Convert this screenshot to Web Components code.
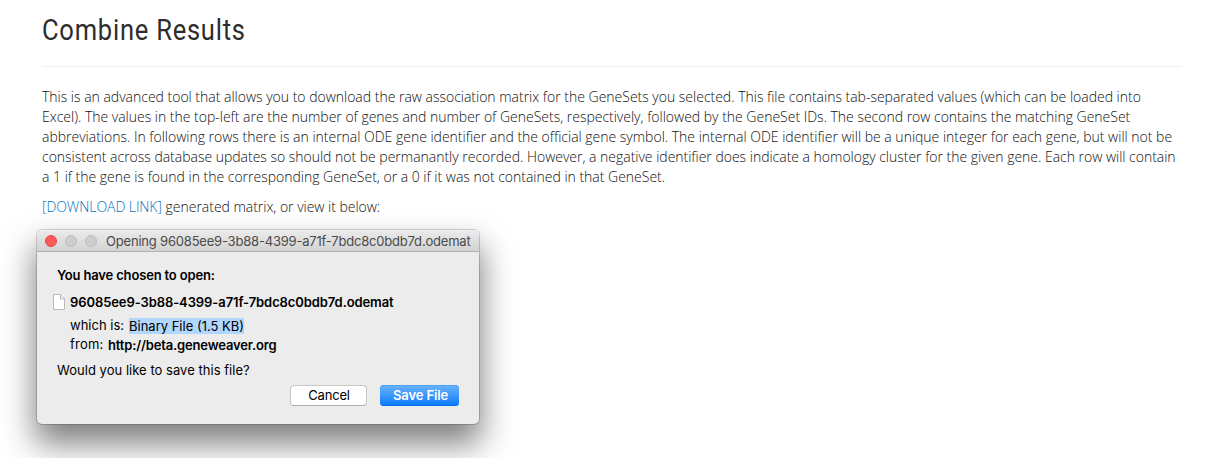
<!DOCTYPE html>
<html lang="en">
<head>
<meta charset="utf-8">
<title>Combine Results</title>
<style>
html,body{margin:0;background:#fff}
body{height:458px;overflow:hidden;font:300 14px/20px "Open Sans",sans-serif;color:#111}
</style>
</head>
<body>
<combine-page></combine-page>
<script>
// Text run whose tracking is set so that it fills the given width.
class FitText extends HTMLElement {
  constructor() {
    super();
    this.attachShadow({mode: 'open'}).innerHTML =
      '<style>:host{display:inline-block;white-space:pre}span{display:inline-block}</style><span><slot></slot></span>';
  }
  connectedCallback() {
    const target = parseFloat(this.getAttribute('w'));
    const span = this.shadowRoot.querySelector('span');
    const natural = span.offsetWidth;
    span.style.letterSpacing = (target - natural) / this.textContent.length + 'px';
    this.style.width = target + 'px';
  }
}

class PageHeading extends HTMLElement {
  constructor() {
    super();
    this.attachShadow({mode: 'open'}).innerHTML = `
      <style>
        :host{display:block;height:66px;border-bottom:1px solid #eee;box-sizing:content-box}
        h1{margin:0;padding-top:13px;font:400 29px/34px Roboto,sans-serif;color:#2d2d2d;transform:scaleX(.88);transform-origin:0 0}
      </style><h1><slot></slot></h1>`;
  }
}

class MacButton extends HTMLElement {
  constructor() {
    super();
    this.attachShadow({mode: 'open'}).innerHTML = `
      <style>
        :host{display:block}
        button{display:flex;justify-content:center;align-items:center;box-sizing:border-box;width:77px;height:21px;margin:0;padding:0 0 0 1px;
          border:1px solid #c6c6c6;border-bottom-color:#adadad;border-radius:4px;background:#fff;color:#000;font:400 13px/19px Inter,sans-serif}
        :host([primary]) button{width:79px;border:0;background:linear-gradient(#6cb3fa,#3b97fc 50%,#087aff);
          box-shadow:inset 0 1px #4ba2f8,inset 0 -1px #0870ee;color:#fff;font-weight:600;padding-left:2px}
      </style><button><slot></slot></button>`;
  }
}

class MacDialog extends HTMLElement {
  constructor() {
    super();
    this.attachShadow({mode: 'open'}).innerHTML = `
      <style>
        :host{display:block;box-sizing:border-box;width:442px;height:194px;border-radius:5px;background:#ececec;overflow:visible;
          box-shadow:0 0 0 1px rgba(0,0,0,.17),0 18px 32px 2px rgba(0,0,0,.5);font:400 13px/16px Inter,sans-serif;color:#000}
        header{display:flex;align-items:center;box-sizing:border-box;height:22px;padding-left:8px;border-radius:5px 5px 0 0;
          background:linear-gradient(#ebebeb,#d3d3d3);border-bottom:1px solid #b1b1b1;box-shadow:inset 0 1px #f4f4f4;color:#4b4b4b}
        i{box-sizing:border-box;width:12px;height:12px;border-radius:50%;border:1px solid #bdbdbd;background:#cdcdcd;margin-right:8px}
        i.close{background:#fc5b57;border-color:#e2484a}
        .title{margin-left:1px;padding-top:1px}
      </style>
      <header><i class="close"></i><i></i><i></i><span class="title"><slot name="title"></slot></span></header>
      <slot></slot>`;
  }
}

class DownloadPrompt extends HTMLElement {
  constructor() {
    super();
    this.attachShadow({mode: 'open'}).innerHTML = `
      <style>
        :host{display:block;padding:15px 20px 0}
        .row{display:flex;height:16px}
        b{font-weight:600}
        .file{margin:11px 0 0 -4px;gap:5px}
        .file svg{display:block;flex:none}
        .which{margin:7px 0 0 13px;gap:5px}
        .from{margin:3px 0 0 13px;gap:5px}
        .value{margin-top:1px;height:16px}
        mark{background:#b2d7fe;color:#000}
        .ask{margin-top:10px}
        .actions{display:flex;justify-content:flex-end;gap:13px;margin-top:7px}
      </style>
      <div class="row"><b><fit-text w="158">You have chosen to open:</fit-text></b></div>
      <div class="row file">
        <svg width="12" height="17" viewBox="0 0 12 17"><path d="M.5 .5h7l4 4.500v10.500h-11z" fill="#fff" stroke="#b9b9b9"/><path d="M7.500 .5v4.500h4" fill="#eee" stroke="#b9b9b9"/></svg>
        <b><fit-text w="324">96085ee9-3b88-4399-a71f-7bdc8c0bdb7d.odemat</fit-text></b>
      </div>
      <div class="row which"><fit-text w="54">which is:</fit-text><mark class="value"><fit-text w="115">Binary File (1.5 KB)</fit-text></mark></div>
      <div class="row from"><fit-text w="33">from:</fit-text><b class="value"><fit-text w="168">http://beta.geneweaver.org</fit-text></b></div>
      <div class="row ask"><fit-text w="193">Would you like to save this file?</fit-text></div>
      <div class="actions"><mac-button><fit-text w="42">Cancel</fit-text></mac-button><mac-button primary><fit-text w="55">Save File</fit-text></mac-button></div>`;
  }
}

class CombinePage extends HTMLElement {
  constructor() {
    super();
    this.attachShadow({mode: 'open'}).innerHTML = `
      <style>
        :host{display:block;padding:0 27px 0 42px}
        p{margin:0 0 10px}
        .intro{margin-top:20px}
        .intro fit-text{display:block}
        a{color:#0073bf;text-decoration:none}
        mac-dialog{margin:13px 0 0 -5px}
      </style>
      <page-heading><fit-text w="231">Combine Results</fit-text></page-heading>
      <p class="intro">
        <fit-text w="1099">This is an advanced tool that allows you to download the raw association matrix for the GeneSets you selected. This file contains tab-separated values (which can be loaded into</fit-text>
        <fit-text w="1088">Excel). The values in the top-left are the number of genes and number of GeneSets, respectively, followed by the GeneSet IDs. The second row contains the matching GeneSet</fit-text>
        <fit-text w="1130">abbreviations. In following rows there is an internal ODE gene identifier and the official gene symbol. The internal ODE identifier will be a unique integer for each gene, but will not be</fit-text>
        <fit-text w="1134">consistent across database updates so should not be permanantly recorded. However, a negative identifier does indicate a homology cluster for the given gene. Each row will contain</fit-text>
        <fit-text w="623">a 1 if the gene is found in the corresponding GeneSet, or a 0 if it was not contained in that GeneSet.</fit-text>
      </p>
      <p><a><fit-text w="120">[DOWNLOAD LINK]</fit-text></a><fit-text w="218"> generated matrix, or view it below:</fit-text></p>
      <mac-dialog><fit-text slot="title" w="365">Opening 96085ee9-3b88-4399-a71f-7bdc8c0bdb7d.odemat</fit-text><download-prompt></download-prompt></mac-dialog>`;
  }
}

customElements.define('page-heading', PageHeading);
customElements.define('mac-button', MacButton);
customElements.define('mac-dialog', MacDialog);
customElements.define('download-prompt', DownloadPrompt);
customElements.define('combine-page', CombinePage);
customElements.define('fit-text', FitText);
</script>
</body>
</html>
